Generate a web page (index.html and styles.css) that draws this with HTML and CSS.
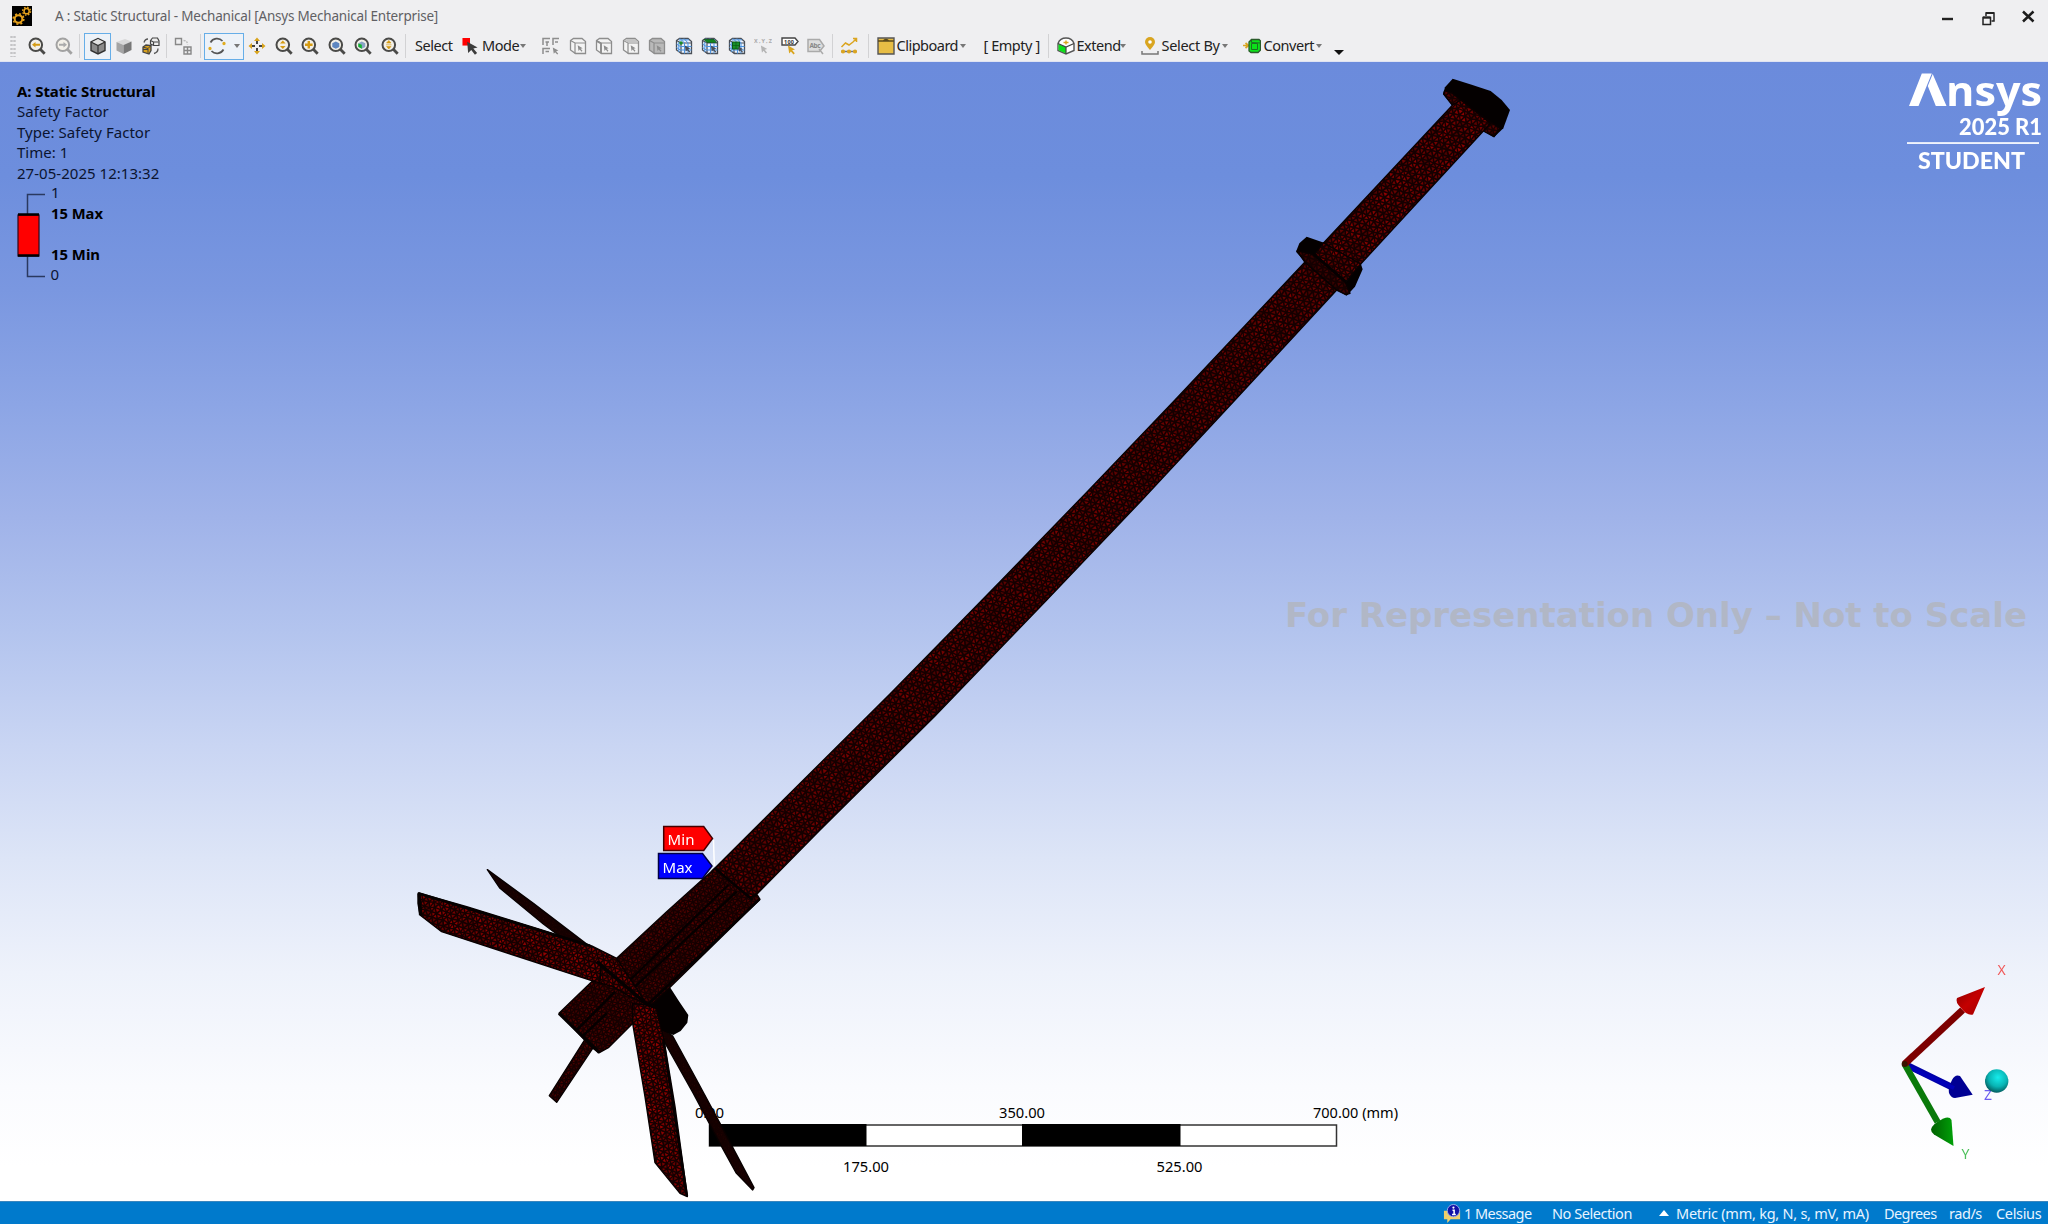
FILE: index.html
```html
<!DOCTYPE html>
<html lang="en">
<head>
<meta charset="utf-8">
<title>A : Static Structural - Mechanical</title>
<link rel="stylesheet" href="styles.css">
</head>
<body>
<svg class="defs" width="0" height="0">
  <defs>
    <symbol id="lens" viewBox="0 0 18 18"><circle cx="7.8" cy="7.8" r="6.3" fill="#f3f0e8" stroke="currentColor" stroke-width="2"/><path d="M12.3 12.3l4.4 4.4" stroke="currentColor" stroke-width="2.8"/></symbol>
    <symbol id="cube" viewBox="0 0 18 18"><path d="M1.5 3.5l3-2H13l3.500 3v12H6.500l-5-3.500z" fill="var(--f,#f4f4f4)" stroke="currentColor" stroke-width="1.300"/><path d="M1.500 3.500L6 6h10.500M6 6v10.500" fill="none" stroke="currentColor" stroke-width="1.200"/></symbol>
    <symbol id="grid" viewBox="0 0 18 18"><path d="M6 9.500h10.500M6 13h10.500M9.500 6v10.500M13 6v10.500M3.800 5v10M4 3l10-.2M1.500 7l4.500 3M1.500 10.500l4.500 3M5 1.500l4.500 4.500M9 1.500L13 6" stroke="#4c94e0" stroke-width="1" fill="none"/></symbol>
    <symbol id="ptr" viewBox="0 0 10 10"><path d="M1 .5l7 4-2.800.8 2.600 3-1.300 1.200-2.600-3-1.700 2z" fill="currentColor"/></symbol>
  </defs>
</svg>
<div class="app">
  <header class="titlebar">
    <svg class="appicon" viewBox="0 0 20 20"><rect width="20" height="20"/><g fill="none" stroke="#e5a11c"><circle cx="6.500" cy="13" r="3.800" stroke-width="2"/><circle cx="6.500" cy="13" r="5.300" stroke-width="1.600" stroke-dasharray="2 2.160"/><circle cx="14.600" cy="5.200" r="2.600" stroke-width="1.500"/><circle cx="14.600" cy="5.200" r="4" stroke-width="1.300" stroke-dasharray="1.600 1.540"/></g></svg>
    <h1 class="title">A : Static Structural - Mechanical [Ansys Mechanical Enterprise]</h1>
    <svg class="winctl" viewBox="0 0 120 30"><path d="M14 18h11" stroke="#222" stroke-width="2.400"/><g fill="none" stroke="#222" stroke-width="1.500"><path d="M55 16.500h7.500v7H55z"/><path d="M55 16.500h7.500" stroke-width="2.200"/><path d="M58 15v-3h8v8h-2.500" /><path d="M58 12h8" stroke-width="2"/></g><path d="M95 10.500l10.500 10M105.500 10.500L95 20.500" stroke="#1c1c1c" stroke-width="2.500"/></svg>
  </header>
  <nav class="toolbar">
    <span class="grip"></span>
    <span class="slot"><svg class="ic dark" viewBox="0 0 18 18"><use href="#lens"/><path d="M4 7.800L7.500 5v1.800H12v2H7.500v1.800z" fill="#d59b12"/></svg></span>
    <span class="slot"><svg class="ic light" viewBox="0 0 18 18"><use href="#lens"/><path d="M12 7.800L8.500 5v1.800H4v2h4.500v1.800z" fill="#aaa"/></svg></span>
    <span class="sep"></span>
    <span class="boxed one"><svg class="ic" viewBox="0 0 18 18"><path d="M2 5l7-3.500L16 5v8.500L9 17l-7-3.500z" fill="#8b8b8b" stroke="#333" stroke-width="1.400"/><path d="M2.500 5.200L9 2l6.500 3.200L9 8.300z" fill="#e2e2e2"/><path d="M9 8.500v8M2 5l7 3.500L16 5" stroke="#333" stroke-width="1.200" fill="none"/></svg></span>
    <span class="slot"><svg class="ic" viewBox="0 0 18 18"><path d="M1.500 5L10 2l6.500 2.500L8.500 8z" fill="#d8d8d8"/><path d="M1.500 5l7 3v9l-7-3.500z" fill="#a4a4a4"/><path d="M8.500 8l8-3.500V13l-8 4z" fill="#777"/></svg></span>
    <span class="slot"><svg class="ic" viewBox="0 0 18 18"><g stroke="#444" fill="#eee" stroke-width="1.200"><path d="M8.500 3.500l2-2.500h5l1.500 3v4.500h-5L8.500 7z"/><path d="M8.500 3.500L11.500 5h5M11.500 5v3.500" /></g><path d="M1 10l3-2 5 .5v5L7 17l-6-2z" fill="#d9a11c" stroke="#444" stroke-width="1.300"/><path d="M1 10l5 1.500L9 8.500M6 11.500V17M1 12.500h5" stroke="#444" fill="none"/><path d="M2 5.500Q3 2 6 2M16 11.500q0 4-4 5" stroke="#555" stroke-width="1.300" fill="none"/></svg></span>
    <span class="sep"></span>
    <span class="slot w31"><svg class="ic" viewBox="0 0 18 18" fill="none" stroke="#888" stroke-width="1.400"><path d="M1.500 1.500h6v6h-6zM10 10h7v7h-7zM13.500 10v7M10 13.500h7"/><path d="M9.500 3.500q4 0 4 4" stroke="#bbb" stroke-dasharray="2 1"/></svg></span>
    <span class="sep"></span>
    <span class="boxed two"><svg class="ic" viewBox="0 0 18 18" fill="none" stroke="#555" stroke-width="1.700"><path d="M2.500 5.500A7.500 7.500 0 0 1 14.500 4M15.500 12.500A7.500 7.500 0 0 1 3.500 14"/><circle cx="16" cy="6.500" r=".8" stroke="#e0ad20"/><circle cx="2" cy="11.500" r=".8" stroke="#e0ad20"/></svg><i class="dd"></i></span>
    <span class="slot"><svg class="ic" viewBox="0 0 18 18"><g fill="#d9a41b"><path d="M9 .5l3 3.500H6zM9 17.500l3-3.500H6zM.5 9L4 6v6zM17.500 9L14 6v6z"/></g><path d="M9 4v3M9 11v3M4 9h3M11 9h3" stroke="#444" stroke-width="2"/></svg></span>
    <span class="slot"><svg class="ic dark" viewBox="0 0 18 18"><use href="#lens"/><path d="M7.800 3.500l2.800 3H5zM7.800 12l2.800-3H5z" fill="#d59b12"/></svg></span>
    <span class="slot"><svg class="ic dark" viewBox="0 0 18 18"><use href="#lens"/><path d="M7.800 4v7.600M4 7.800h7.600" stroke="#d59b12" stroke-width="2.400"/></svg></span>
    <span class="slot"><svg class="ic dark" viewBox="0 0 18 18"><use href="#lens"/><path d="M4.300 6.200l3.500-1.800 3.500 1.800v3.700l-3.500 1.900-3.500-1.900z" fill="#5d86c0"/></svg></span>
    <span class="slot"><svg class="ic dark" viewBox="0 0 18 18"><use href="#lens"/><path d="M4.300 6.200l3.500-1.800 3.500 1.800v3.700l-3.500 1.900-3.500-1.900z" fill="#8aa4c4"/><path d="M4.300 6.500l3.500 1.300v4l-3.500-2z" fill="#12b52c"/></svg></span>
    <span class="slot"><svg class="ic dark" viewBox="0 0 18 18"><use href="#lens"/><path d="M7.800 3.500l2.200 2.500H5.600zM7.800 12l2.200-2.500H5.600zM5 7.800h5.600" fill="#d59b12" stroke="#d59b12" stroke-width=".6"/></svg></span>
    <span class="sep"></span>
    <span class="lbl select">Select</span>
    <svg class="modeic" viewBox="0 0 17 18"><path d="M0 0h8v8H0z" fill="#f00"/><path d="M5 4l11 6-4.500 1 4 5-2.300 1.800-3.900-5L6 16z" fill="#3c3c3c"/></svg>
    <span class="lbl mode">Mode</span><i class="dd"></i>
    <span class="slot filt"><svg class="ic grey" viewBox="0 0 18 18"><g stroke="currentColor" stroke-width="1.500" fill="none"><path d="M1 8V1.500h7M3.500 5H7M5 5v4M11 8V1.500h6M13 5h3M1 17v-5.500h7M3.500 14.500H7"/></g><use href="#ptr" x="10" y="10" width="8" height="8"/></svg></span>
    <span class="slot"><svg class="ic grey" viewBox="0 0 18 18"><use href="#cube"/><use href="#ptr" x="8" y="8" width="7" height="7"/></svg></span>
    <span class="slot"><svg class="ic grey" viewBox="0 0 18 18"><use href="#cube"/><path d="M1.500 4L6 6.500V16" stroke="currentColor" stroke-width="1.800" fill="none"/><use href="#ptr" x="8" y="8" width="7" height="7"/></svg></span>
    <span class="slot"><svg class="ic grey" viewBox="0 0 18 18"><use href="#cube"/><path d="M2 3.500l3-1.500h8l3 3.500H6z" fill="#c4c4c4"/><use href="#ptr" x="8" y="8" width="7" height="7"/></svg></span>
    <span class="slot"><svg class="ic grey filled" viewBox="0 0 18 18"><use href="#cube"/><use href="#ptr" x="8" y="8" width="7" height="7"/></svg></span>
    <span class="slot"><svg class="ic mesh" viewBox="0 0 18 18"><use href="#cube"/><use href="#grid"/><circle cx="6" cy="6" r="1.800" fill="#1a8a2a"/><use href="#ptr" x="9" y="8" width="8" height="8"/></svg></span>
    <span class="slot"><svg class="ic mesh" viewBox="0 0 18 18"><use href="#cube"/><use href="#grid"/><path d="M3 2.500h10l2.500 3H6z" fill="#12851f" stroke="#0c5a14" stroke-width=".8"/><use href="#ptr" x="9" y="8" width="8" height="8"/></svg></span>
    <span class="slot"><svg class="ic mesh" viewBox="0 0 18 18"><use href="#cube"/><use href="#grid"/><path d="M4.500 5h7v7h-7z" fill="#17912a" stroke="#0c5a14"/><path d="M8 5v7M4.500 8.500h7" stroke="#0c5a14" stroke-width=".7"/><use href="#ptr" x="9.500" y="9" width="7" height="7"/></svg></span>
    <span class="slot"><svg class="ic pale" viewBox="0 0 18 18"><text x="0" y="6" class="tiny" textLength="18">X,Y,Z</text><use href="#ptr" x="6" y="8" width="9" height="9"/></svg></span>
    <span class="slot"><svg class="ic" viewBox="0 0 18 18"><path d="M1 1h13l3 3.500L14 8H1z" fill="#fff" stroke="#444" stroke-width="1.400"/><text x="3" y="7" class="tiny b" textLength="10">100</text><use href="#ptr" class="gold" x="6" y="8" width="10" height="10"/></svg></span>
    <span class="slot"><svg class="ic" viewBox="0 0 18 18"><path d="M1 2.500h11.500L17 9l-4.500 5.500H1z" fill="#ddd" stroke="#aaa" stroke-width="1.500"/><text x="2.500" y="11" class="abc" textLength="11">Abc</text><path d="M12 12l4 5" stroke="#aaa" stroke-width="1.500"/></svg></span>
    <span class="sep"></span>
    <span class="slot w33"><svg class="ic" viewBox="0 0 18 18" fill="none" stroke="#dba520" stroke-width="1.500"><path d="M1.500 10l4-4 3.500 2 4-3 3-3M13 1.500h3.500V5"/><path d="M1 14.500h16" stroke="#777"/><g fill="#dba520"><circle cx="3" cy="14.500" r="1.300"/><circle cx="9" cy="14.500" r="1.300"/><circle cx="15" cy="14.500" r="1.300"/></g></svg></span>
    <span class="sep"></span>
    <svg class="ic clip" viewBox="0 0 18 18"><path d="M1 1h16v16H1z" fill="#e7bd45" stroke="#555" stroke-width="1.400"/><path d="M1 4h16M6 4.200q3-3.500 6 0" stroke="#5b4a1c" stroke-width="1.400" fill="none"/></svg>
    <span class="lbl clipboard">Clipboard</span><i class="dd"></i>
    <span class="lbl empty">[ Empty ]</span>
    <span class="sep"></span>
    <svg class="ic ext" viewBox="0 0 18 18"><path d="M1 6.500Q3 1 9 1t8 5.500v7L9 17l-8-3.500z" fill="#fff" stroke="#555" stroke-width="1.400"/><path d="M1.500 7L9 10v6.500l-7.500-3.200z" fill="#0de01a"/><path d="M1 6.500L9 10l8-3.500M9 10v7" stroke="#444" stroke-width="1.200" fill="none"/><path d="M6.500 5.500h5M9 3.500v4" stroke="#d9a520" stroke-width="1.400"/></svg>
    <span class="lbl extend">Extend</span><i class="dd"></i>
    <svg class="ic pin" viewBox="0 0 18 18"><path d="M9 13Q4 7.500 4 5a5 5 0 0 1 10 0q0 2.500-5 8z" fill="#d9a520"/><circle cx="9" cy="5" r="1.800" fill="#fff"/><path d="M1 14v3h16v-3" fill="none" stroke="#777" stroke-width="1.500"/></svg>
    <span class="lbl selectby">Select By</span><i class="dd"></i>
    <svg class="ic conv" viewBox="0 0 18 18"><path d="M0 8.500h5M2.500 6l3 2.500-3 2.500" stroke="#d9a520" stroke-width="1.700" fill="none"/><path d="M6 5l2.500-2.500H16l1.500 1.500v9L15 15.500H8L6 14z" fill="#0ce01a" stroke="#2b5a2b" stroke-width="1.300"/><path d="M8.500 2.500v3l9 .5M8.500 6.500h6v6h-6z" stroke="#1c6e22" fill="none"/></svg>
    <span class="lbl convert">Convert</span><i class="dd"></i>
    <i class="dd overflow"></i>
  </nav>
  <main class="viewport">
    <section class="legend">
      <b class="l1">A: Static Structural</b>
      <span class="l2">Safety Factor</span>
      <span class="l2">Type: Safety Factor</span>
      <span class="l2">Time: 1</span>
      <span class="l2">27-05-2025 12:13:32</span>
      <svg class="bar" width="120" height="104" viewBox="14 183 120 104">
        <path d="M45 194.500H27.500V276.500H45" fill="none" stroke="#2a3960" stroke-width="1.500"/>
        <rect x="18" y="215" width="21" height="41" fill="#f00" stroke="#300818" stroke-width="1.200"/>
        <path d="M18 214.500h21M18 255.500h21" stroke="#000" stroke-width="2.600"/>
        <text x="51" y="198">1</text>
        <text x="51" y="218.500" class="b" textLength="52" lengthAdjust="spacingAndGlyphs">15 Max</text>
        <text x="51" y="259.500" class="b" textLength="49" lengthAdjust="spacingAndGlyphs">15 Min</text>
        <text x="50.500" y="280">0</text>
      </svg>
    </section>

    <svg class="layer" viewBox="0 62 2048 1139">
      <g class="scale">
        <text x="695" y="1118" textLength="29">0.00</text>
        <text x="999" y="1118" textLength="46" lengthAdjust="spacingAndGlyphs">350.00</text>
        <text x="1313" y="1118" textLength="85" lengthAdjust="spacingAndGlyphs">700.00 (mm)</text>
        <text x="843" y="1172" textLength="46" lengthAdjust="spacingAndGlyphs">175.00</text>
        <text x="1156.500" y="1172" textLength="46" lengthAdjust="spacingAndGlyphs">525.00</text>
        <rect x="709.500" y="1125" width="627" height="21" fill="#fff" stroke="#333" stroke-width="1.500"/>
        <path d="M709 1124h157.500v22H709zM1022 1124h158.500v22H1022z"/>
      </g>
      <text class="watermark" x="1285" y="627" textLength="742" lengthAdjust="spacingAndGlyphs">For Representation Only – Not to Scale</text>
    </svg>
    <canvas class="layer" id="model" width="2048" height="1139"></canvas>
    <svg class="layer" viewBox="0 62 2048 1139">
      <defs>
        <linearGradient id="rx" x1="0" y1="0" x2="1" y2="1"><stop offset="0" stop-color="#8a0000"/><stop offset=".5" stop-color="#c40000"/><stop offset="1" stop-color="#a00000"/></linearGradient>
        <linearGradient id="gy" x1="0" y1="0" x2="1" y2="0"><stop offset="0" stop-color="#006000"/><stop offset="1" stop-color="#00a008"/></linearGradient>
        <radialGradient id="ball" cx=".55" cy=".35" r=".65"><stop offset="0" stop-color="#16ecec"/><stop offset=".6" stop-color="#08b4b4"/><stop offset="1" stop-color="#045e60"/></radialGradient>
      </defs>
      <path d="M713.500 840l.8 26" stroke="#fff" stroke-width="1.500"/>
      <path d="M663.700 826.500h40l8.800 12-8.800 12h-40z" fill="#f00" stroke="#400" stroke-width="1.500"/>
      <path d="M658.500 853.500h44l9.500 12.500-9.500 12.500h-44z" fill="#00f" stroke="#004" stroke-width="1.500"/>
      <text class="tag" x="667.500" y="845" textLength="27">Min</text>
      <text class="tag" x="662.500" y="873" textLength="30">Max</text>

      <g class="logo">
        <path d="M1909 106l12.800-32.600h10L1918.500 106zM1932.700 74L1946.500 106h-10.700l-8-20z"/>
        <text x="1946" y="105.700" class="brand" textLength="96" lengthAdjust="spacingAndGlyphs">nsys</text>
        <text x="1959" y="134.500" class="ver" textLength="83" lengthAdjust="spacingAndGlyphs">2025 R1</text>
        <rect x="1907" y="142.200" width="132" height="1.700"/>
        <text x="1918" y="169" class="edu" textLength="107" lengthAdjust="spacingAndGlyphs">STUDENT</text>
      </g>

      <g class="triad">
        <path d="M1904.600 1064l47 23" stroke="#0000a8" stroke-width="6.500"/>
        <path d="M1972.700 1094.700L1960 1076q-5-2-8 4-4 8-3 13 2 5 6 5z" fill="#000093"/>
        <path d="M1906 1066l48 22" stroke="#0000b8" stroke-width="4"/>
        <path d="M1904.600 1064l33 58" stroke="#0a7a0a" stroke-width="6.500"/>
        <path d="M1953.500 1146L1951.500 1120q-2-4-8-1.500-11 5-12.500 11 0 3 3 5z" fill="url(#gy)"/>
        <path d="M1904.600 1064l58-54" stroke="#7d0000" stroke-width="7"/>
        <path d="M1985 987l-28 11q-2 4 4 10 6 8 12 6.500z" fill="url(#rx)"/>
        <circle cx="1904.600" cy="1064" r="3" fill="#3a1400"/>
        <text x="1984" y="1100" fill="#6a5cf0">Z</text>
        <circle cx="1996.700" cy="1081" r="11.700" fill="url(#ball)"/>
        <text x="1997.500" y="975" fill="#f05a5a">X</text>
        <text x="1961.500" y="1159" fill="#4cc05a">Y</text>
      </g>
    </svg>
  </main>
  <footer class="status">
    <svg class="msgic" viewBox="0 0 20 20"><path d="M1 7h17v9H8l-3.500 4v-4H1z" fill="#f0cf6c"/><circle cx="11" cy="7" r="6.500" fill="#1212a8" stroke="#9ab0e8" stroke-width="1"/><path d="M10 6.500h1.700V11M9.500 11h4" stroke="#fff" stroke-width="1.600" fill="none"/><circle cx="11" cy="3.800" r="1.200" fill="#fff"/></svg>
    <span class="st m">1 Message</span>
    <span class="st n">No Selection</span>
    <i class="up"></i>
    <span class="st u">Metric (mm, kg, N, s, mV, mA)</span>
    <span class="st d">Degrees</span>
    <span class="st r">rad/s</span>
    <span class="st c">Celsius</span>
  </footer>
</div>
<script src="model.js"></script>
</body>
</html>
```
FILE: model.js
```js
// Draws the meshed rocket: each part is a dark silhouette filled with small triangular elements.
(function () {
  var ctx = document.getElementById('model').getContext('2d');
  var seed = 7;
  function rnd() { seed = (seed * 16807) % 2147483647; return seed / 2147483647; }

  function tail(pts) { return pts.map(function (p) { return [400 + p[0] / 3, 800 + p[1] / 3]; }); }
  function nose(pts) { return pts.map(function (p) { return [1270 + p[0] / 3, 60 + p[1] / 3]; }); }

  function trace(pts) {
    ctx.beginPath();
    pts.forEach(function (p, i) { ctx[i ? 'lineTo' : 'moveTo'](p[0], p[1]); });
    ctx.closePath();
  }

  function solid(pts) { trace(pts); ctx.fillStyle = '#040000'; ctx.fill(); }

  function meshed(pts, size, level, angle) {
    trace(pts);
    ctx.fillStyle = '#150000';
    ctx.fill();
    ctx.save();
    ctx.clip();
    var xs = pts.map(function (p) { return p[0]; }), ys = pts.map(function (p) { return p[1]; });
    var cx = (Math.min.apply(0, xs) + Math.max.apply(0, xs)) / 2;
    var cy = (Math.min.apply(0, ys) + Math.max.apply(0, ys)) / 2;
    var c = Math.cos(angle), s = Math.sin(angle), u = 0, v = 0;
    pts.forEach(function (p) {
      u = Math.max(u, Math.abs((p[0] - cx) * c + (p[1] - cy) * s));
      v = Math.max(v, Math.abs(-(p[0] - cx) * s + (p[1] - cy) * c));
    });
    var nx = Math.ceil(u / size) + 2, h = size * 0.866, ny = Math.ceil(v / h) + 2, g = [];
    for (var j = -ny; j <= ny; j++) {
      var row = [];
      for (var i = -nx; i <= nx; i++) {
        var x = (i + (j & 1) * 0.5) * size + (rnd() - 0.5) * size * 0.4;
        var y = j * h + (rnd() - 0.5) * size * 0.4;
        row.push([cx + x * c - y * s, cy + x * s + y * c]);
      }
      g.push(row);
    }
    function tri(a, b, d) {
      var mx = (a[0] + b[0] + d[0]) / 3, my = (a[1] + b[1] + d[1]) / 3, k = 0.55;
      var drift = 0.88 + 0.14 * Math.sin(mx * 0.21) * Math.cos(my * 0.19);
      ctx.fillStyle = 'rgb(' + Math.round(level * drift * (0.65 + rnd() * 0.45)) + ',2,1)';
      trace([a, b, d].map(function (p) { return [mx + (p[0] - mx) * k, my + (p[1] - my) * k]; }));
      ctx.fill();
    }
    for (var r = 0; r < g.length - 1; r++) {
      var odd = (r - ny) & 1;
      for (var q = 0; q < g[r].length - 1; q++) {
        var A = g[r][q], B = g[r][q + 1], C = g[r + 1][q], D = g[r + 1][q + 1];
        if (odd) { tri(A, B, D); tri(A, D, C); } else { tri(A, B, C); tri(B, D, C); }
      }
    }
    ctx.restore();
    trace(pts);
    ctx.strokeStyle = '#080000';
    ctx.lineWidth = 1.4;
    ctx.lineJoin = 'round';
    ctx.stroke();
  }

  function line(pts, w) {
    ctx.beginPath();
    pts.forEach(function (p, i) { ctx[i ? 'lineTo' : 'moveTo'](p[0], p[1]); });
    ctx.strokeStyle = '#050000';
    ctx.lineWidth = w;
    ctx.stroke();
  }

  ctx.translate(0, -62);
  var axis = -Math.PI / 4;

  // rear fins
  meshed(tail([[262, 209], [400, 310], [570, 440], [510, 432], [430, 372], [300, 265]]), 4, 35, 0.6);
  meshed(tail([[780, 680], [818, 708], [890, 840], [960, 970], [1062, 1163], [1058, 1170], [1008, 1118], [965, 1040], [880, 880], [790, 720]]), 4, 35, 1.1);
  solid(tail([[740, 600], [810, 562], [838, 605], [865, 645], [862, 668], [842, 693], [820, 705], [780, 690]]));
  meshed(tail([[555, 718], [580, 742], [470, 907], [448, 887]]), 5, 85, 1);

  // nose cap and upper tube
  solid(nose([[548, 56], [605, 74], [662, 93], [695, 120], [720, 150], [700, 205], [672, 232], [640, 213], [548, 137], [519, 102], [525, 82]]));
  meshed(nose([[524, 92], [545, 98], [600, 142], [690, 205], [672, 230], [640, 213], [548, 137], [521, 102]]), 6, 95, axis);
  meshed(nose([[548, 135], [572, 120], [662, 190], [640, 213], [272, 612], [160, 550]]), 6, 135, axis);

  // main tube, its lower end running under the booster edge
  meshed([[1305, 262], [1240, 331], [1175, 400], [1088, 491], [1000, 581.7], [890, 694], [783.3, 800], [712, 871],
          [745, 900], [757, 894], [820, 830], [934, 717], [1046.7, 600], [1142, 500], [1235, 400], [1336.7, 290]], 6, 120, axis);

  // collar
  solid(nose([[78, 575], [88, 550], [110, 530], [162, 548], [135, 582], [228, 665], [272, 610], [278, 628], [255, 680], [230, 707], [200, 690], [105, 607]]));
  meshed(nose([[82, 572], [130, 584], [225, 665], [240, 700], [228, 704], [200, 690], [105, 607]]), 6, 70, axis);
  meshed(nose([[160, 548], [272, 612], [228, 665], [135, 582]]), 6, 135, axis);
  line(nose([[130, 582], [228, 666]]), 2.5);

  // booster section
  meshed(tail([[945, 205], [1050, 292], [1072, 285], [1080, 298], [810, 562], [700, 668], [625, 743], [598, 758], [575, 742], [477, 640], [575, 545], [650, 475], [800, 335]]), 5, 88, axis);
  line(tail([[945, 205], [1058, 300]]), 2.5);
  line(tail([[985, 255], [690, 540]]), 2.2);
  line(tail([[1010, 275], [705, 560]]), 2.2);
  line(tail([[645, 575], [530, 690]]), 2.5);
  line(tail([[620, 640], [550, 706]]), 2.5);
  line(tail([[1078, 298], [745, 612]]), 2.6);
  line(tail([[477, 640], [598, 758]]), 3);

  // front fins
  meshed(tail([[55, 279], [200, 320], [420, 388], [575, 438], [650, 475], [740, 612], [690, 590], [640, 560], [575, 542], [340, 465], [125, 395], [60, 345], [54, 310]]), 5.5, 145, 0.3);
  line(tail([[55, 280], [570, 437]]), 2.6);
  line(tail([[57, 280], [62, 345]]), 3.5);
  meshed(tail([[698, 610], [740, 615], [768, 625], [792, 720], [825, 920], [862, 1190], [840, 1180], [765, 1088], [735, 890], [698, 670]]), 5.5, 155, 1.4);
  line(tail([[790, 720], [861, 1188]]), 2.4);
  line(tail([[590, 485], [740, 612], [770, 622]]), 3.5);
  line(tail([[602, 500], [600, 545]]), 1.6);
})();
```
FILE: styles.css
```css
* { box-sizing: border-box; }
body { margin: 0; font-family: "Noto Sans", "Open Sans", sans-serif; color: #222; overflow: hidden; }
.defs { position: absolute; }
.app { width: 2048px; height: 1224px; display: flex; flex-direction: column; background: #efeff1; }

.titlebar { height: 31px; display: flex; align-items: center; padding-left: 12px; }
.appicon { width: 20px; height: 20px; }
.title { margin: 0 auto 0 23px; font-size: 13.5px; font-weight: 400; color: #606064; letter-spacing: -0.2px; white-space: nowrap; }
.winctl { width: 120px; height: 30px; }

.toolbar { height: 31px; display: flex; align-items: center; border-bottom: 1px solid #dfe3f2; }
.toolbar > * { flex: none; }
.grip { width: 6px; height: 22px; margin: 0 8px 0 10px; background: radial-gradient(circle, #c4c4c6 1px, transparent 1.4px) 0 0 / 3px 4px; }
.slot { width: 26.5px; display: flex; justify-content: center; }
.w31 { width: 31px; }
.w33 { width: 33px; }
.ic { width: 18px; height: 18px; display: block; }
.dark { color: #4a4a48; }
.light { color: #a2a2a2; }
.pale { color: #b4b4b4; }
.grey { color: #8d8d8d; }
.filled { --f: #b9b9b9; }
.mesh { color: #4a4f57; --f: #e8f2ff; }
.sep { width: 1px; height: 24px; background: #d2d2d4; margin-left: 2px; }
.boxed { height: 27px; display: flex; align-items: center; border: 1.5px solid #66aee8; background: #edf2f8; }
.one { width: 27px; margin-left: 4px; justify-content: center; }
.two { width: 40px; margin-left: 3px; padding-left: 3px; gap: 8px; }
.dd { width: 0; height: 0; border: 3.5px solid transparent; border-top: 4px solid #777; border-bottom: 0; }
.lbl { font-size: 14.5px; line-height: 20px; white-space: nowrap; letter-spacing: -0.45px; position: relative; top: -1px; }
.select { width: 37px; margin-left: 9px; }
.modeic { width: 17px; height: 17px; margin-left: 10px; }
.mode { width: 38px; margin-left: 3px; }
.filt { margin-left: 12px; }
.tiny { font: 700 5.500px "Noto Sans", sans-serif; fill: #aaa; }
.tiny.b { fill: #333; }
.abc { font: 700 6.500px "Noto Sans", sans-serif; fill: #888; }
.gold { color: #d9a520; }
.clip { margin-left: 8px; }
.clipboard { width: 63px; margin-left: 2px; letter-spacing: -0.5px; }
.empty { width: 57px; margin-left: 18px; }
.empty + .sep { margin-left: 7px; }
.ext { margin-left: 8px; }
.extend { width: 43px; margin-left: 2px; }
.pin { margin-left: 15px; }
.selectby { width: 60px; margin-left: 3px; letter-spacing: -0.3px; }
.conv { margin-left: 15px; }
.convert { width: 52px; margin-left: 3px; }
.overflow { border-width: 5px; border-top: 5px solid #111; margin: 12px 0 0 12px; }

.viewport { position: relative; flex: 1; background: linear-gradient(#6b8bdc 0%, #6d8edd 10%, #7a97e0 20%, #8ca5e5 30%, #a0b3e9 40%, #b3c4ee 50%, #c9d5f3 60%, #dde5f7 70%, #eef2fb 80%, #fafbfe 90%, #fff 97%); }
.legend { padding: 19px 0 0 17px; display: flex; flex-direction: column; font-size: 15px; line-height: 20.4px; color: #0b1430; white-space: nowrap; }
.legend b { color: #000; }
.l1 { letter-spacing: -0.08px; }
.l2 { letter-spacing: 0.03px; }
.bar { margin-left: -3px; font-size: 15px; fill: #0b1430; }
.bar .b { font-weight: 700; fill: #000; }
.layer { position: absolute; inset: 0; width: 2048px; height: 1139px; display: block; }
.scale { font-size: 15px; }
.watermark { font: 700 34px "DejaVu Sans", sans-serif; fill: #b1b7c6; }
.tag { font-size: 15px; fill: #fff; }
.logo { fill: #fff; }
.brand { font: 700 42px "Open Sans", sans-serif; }
.ver { font: 900 22px Lato, sans-serif; }
.edu { font: 900 23px Lato, sans-serif; }
.triad { font-size: 14px; }

.status { height: 23px; display: flex; align-items: center; background: #007acc; border-top: 1px solid #3a86bd; color: #e8f4ff; }
.status > * { flex: none; }
.msgic { width: 19px; height: 19px; margin-left: 1443px; }
.st { font-size: 14.500px; line-height: 20px; letter-spacing: -0.45px; white-space: nowrap; }
.m { width: 66px; margin-left: 2px; letter-spacing: -0.55px; }
.n { width: 82px; margin-left: 22px; }
.up { border: 5px solid transparent; border-bottom: 6px solid #fff; border-top: 0; margin-left: 25px; }
.u { width: 194px; margin-left: 7px; letter-spacing: -0.25px; }
.d { width: 52px; margin-left: 14px; letter-spacing: -0.6px; }
.r { width: 33px; margin-left: 13px; }
.c { margin-left: 14px; letter-spacing: -0.35px; }
```
